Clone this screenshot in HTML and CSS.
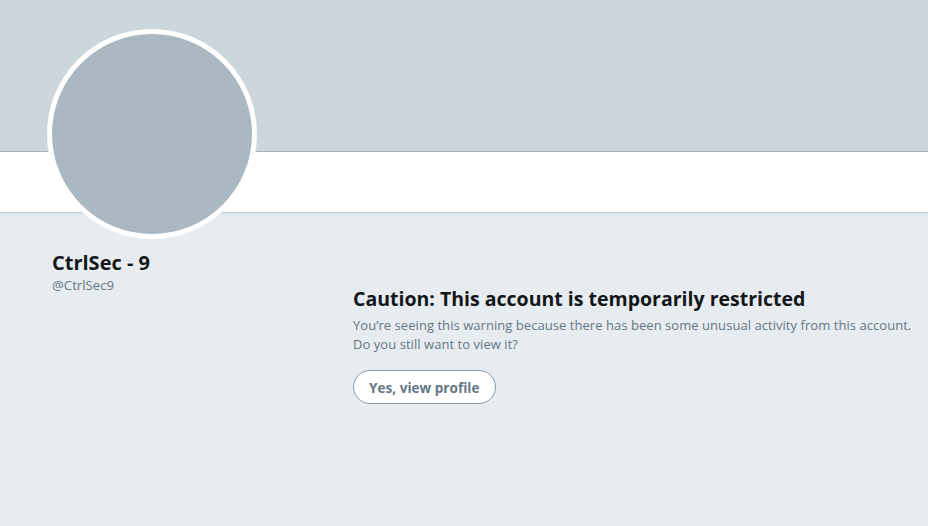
FILE: index.html
```html
<!DOCTYPE html>
<html>
<head>
<meta charset="utf-8">
<link rel="stylesheet" href="styles.css">
</head>
<body>
<div class="page">
  <div class="banner"></div>
  <div class="navbar"></div>
  <div class="avatar"></div>
  <div class="content">
    <div class="profile-card">
      <h1 class="name">CtrlSec - 9</h1>
      <div class="handle">@CtrlSec9</div>
    </div>
    <div class="warning">
      <h2 class="warning-title">Caution: This account is temporarily restricted</h2>
      <p class="warning-text">You’re seeing this warning because there has been some unusual activity from this account. Do you still want to view it?</p>
      <button class="view-btn">Yes, view profile</button>
    </div>
  </div>
</div>
</body>
</html>
```
FILE: styles.css
```css
html, body {
  margin: 0;
  padding: 0;
}
body {
  background: #e6ecf0;
  font-family: "Open Sans", "Noto Sans", sans-serif;
  width: 928px;
  height: 526px;
  overflow: hidden;
}
.page {
  position: relative;
}
.banner {
  height: 151px;
  background: #ccd6dd;
  border-bottom: 1px solid #a4b0ba;
}
.navbar {
  height: 60px;
  background: #ffffff;
  border-bottom: 1px solid #c8d2da;
  box-shadow: 0 1px 2px rgba(0,0,0,0.06);
}
.avatar {
  position: absolute;
  left: 47px;
  top: 29px;
  width: 200px;
  height: 200px;
  border: 5px solid #ffffff;
  border-radius: 50%;
  background: #aab8c2;
}
.content {
  display: grid;
  grid-template-columns: 301px 1fr;
  padding: 0 0 0 52px;
}
.profile-card {
  padding-top: 37px;
}
.name {
  margin: 0;
  font-size: 20px;
  line-height: 26px;
  font-weight: 700;
  color: #14171a;
}
.handle {
  font-size: 13.2px;
  line-height: 18px;
  color: #657786;
}
.warning {
  padding-top: 73px;
}
.warning-title {
  margin: 0;
  font-size: 19.5px;
  line-height: 26px;
  font-weight: 700;
  color: #14171a;
}
.warning-text {
  margin: 4px 0 0;
  font-size: 13px;
  line-height: 19px;
  letter-spacing: 0.05px;
  color: #657786;
  max-width: 570px;
}
.view-btn {
  margin-top: 16px;
  height: 34px;
  padding: 0 15px;
  background: #ffffff;
  border: 1px solid #8899a6;
  border-radius: 100px;
  font-family: inherit;
  font-size: 13.6px;
  font-weight: 700;
  color: #657786;
  cursor: pointer;
}
```
